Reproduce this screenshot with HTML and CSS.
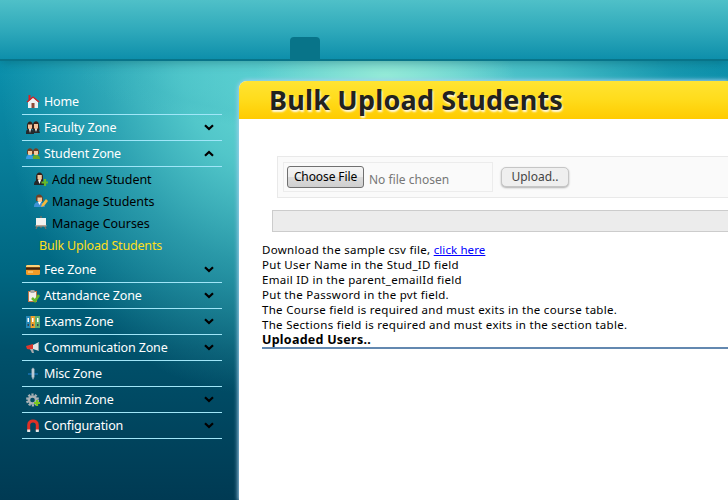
FILE: index.html
```html
<!DOCTYPE html>
<html lang="en">
<head>
<meta charset="utf-8">
<title>Bulk Upload Students</title>
<link rel="stylesheet" href="styles.css">
</head>
<body>
<svg class="defs" aria-hidden="true">
  <symbol id="down" viewBox="0 0 10 7"><path d="M1 1.2 5 5 9 1.2" fill="none" stroke="#000" stroke-width="2.2"/></symbol>
  <symbol id="home" viewBox="0 0 14 14"><path d="M2 7 7 2.500l5 4.500v6H2z" fill="#edf0f2"/><path d="M5.500 8h3v5h-3z" fill="#8d4a39"/><path d="M2.500 0h2v5h-2z" fill="#d22"/><path d="M1 7 7 2l6 5" fill="none" stroke="#d81f20" stroke-width="1.300"/></symbol>
  <symbol id="faculty" viewBox="0 0 14 14"><path d="M1 5c0-6 6-6 6 0v3H1zM7 4c0-5 6-5 6 0l.5 5H7z" fill="#352019"/><path d="M2 3.600h4v3.600L4 9 2 7.200zM8 3h4v4l-2 2-2-2z" fill="#f2c298"/><path d="M0 12c0-4 2-4 4-4s3 1 4 4v1H0zM7 9l3-1 3 1 1 3H8z" fill="#25292b"/><path d="m3 8 1 4 1-4zM9 8l1 3 1-3z" fill="#fff"/></symbol>
  <symbol id="students" viewBox="0 0 14 14"><path d="M1 5c0-5 6-5 6 0v2H1zM7 5c0-5 6-5 6 0v2H7z" fill="#704025"/><path d="M2 4h4v3.500L4 9 2 7.500zM8 4h4v3.500L10 9 8 7.500z" fill="#f7cb9d"/><path d="M0 12c0-4 2-4 4-4s4 1 4 4z" fill="#3a9ce6"/><path d="M7 12c-1-3 1-4 3-4s4 1 4 4z" fill="#6cac26"/></symbol>
  <symbol id="add" viewBox="0 0 14 14"><path d="M2 5c0-6 7-6 7 0v4H2z" fill="#352019"/><path d="M3.500 3H7.800v4L6 9 3.500 7z" fill="#f3c8a0"/><path d="M0 13c0-4 2-5 5-5s5 1 6 5z" fill="#25282a"/><path d="m4 8 1.500 4L7 8z" fill="#fff"/><path d="M11 7v7M7.500 10.500h6.500" stroke="#65b82a" stroke-width="2.200"/></symbol>
  <symbol id="manage" viewBox="0 0 14 14"><path d="M2 5c-1-6 7-6 7 0v2H2z" fill="#704025"/><path d="M3.500 3.500H8v4L6 9 3.500 7z" fill="#f5c79a"/><path d="M0 13c0-4 2-5 5-5s5 1 6 5z" fill="#3f92d5"/><path d="m4 8 1.500 3L7 8z" fill="#fff"/><path d="m7 13 1-3 4-5 2 2-4 5z" fill="#f5b83c"/></symbol>
  <symbol id="board" viewBox="0 0 14 14"><path d="m4 9-2 4m8-4 2 4M7 0v12" stroke="#9c7153"/><path d="M2 2h10v8H2z" fill="#f2f2ef"/><path d="M1.500 9h11v1.500h-11z" fill="#baa393"/></symbol>
  <symbol id="card" viewBox="0 0 14 14"><rect y="2" width="14" height="10" rx="1.500" fill="#f39b27"/><path d="M0 3.500q0-1.500 1.500-1.500h11q1.500 0 1.500 1.500V4H0z" fill="#ffd176"/><path d="M0 4.300h14v2.500H0z" fill="#42240e"/><path d="M2 9h5" stroke="#ffe4a1"/></symbol>
  <symbol id="attend" viewBox="0 0 14 14"><path d="M2 2h9v11H2z" fill="#bd764a"/><path d="M3 3h7v9H3z" fill="#f3eeea"/><path d="M4.500 1h4v3h-4z" fill="#a9a7a6"/><path d="m6 9 3 3 4-6" fill="none" stroke="#65b82a" stroke-width="2.500"/></symbol>
  <symbol id="exams" viewBox="0 0 14 14"><path d="M0 1h4.500v12H0z" fill="#2589b9"/><path d="M4.500 1H9v12H4.500z" fill="#eba02d"/><path d="M9 1h5v12H9z" fill="#5fae70"/><path d="M1.500 3H3v4H1.500zM6 3h1.500v4H6zM11 3h1.500v4H11z" fill="#fff"/><path d="M1.500 10H3M6 10h1.500M11 10h1.500" stroke="#39434a" stroke-width="2"/></symbol>
  <symbol id="horn" viewBox="0 0 14 14"><path d="m0 5 7-2v6L1 8z" fill="#dd382e"/><path d="m7 4 6-3v9L7 8z" fill="#e2e3e4"/><path d="M4 8h3l1 4H6z" fill="#a7aaad"/><path d="M12.500 1v9" stroke="#949ca2"/></symbol>
  <symbol id="misc" viewBox="0 0 14 14"><path d="M2 7h10" stroke="#1269a0" stroke-width="2"/><path d="M5.500 2 7 .5 8.500 2v8L7 13l-1.500-3z" fill="#9eb1bf"/><path d="M7 2v8" stroke="#dce5eb"/></symbol>
  <symbol id="gear" viewBox="0 0 14 14"><circle cx="6.500" cy="7" r="5.500" fill="none" stroke="#a8b0b4" stroke-width="2" stroke-dasharray="2.200 1.250"/><circle cx="6.500" cy="7" r="3.600" fill="none" stroke="#a8b0b4" stroke-width="2.500"/><path d="M11 7v6M8 10h6" stroke="#78c81e" stroke-width="2.200"/></symbol>
  <symbol id="magnet" viewBox="0 0 14 14"><path d="M2.700 12V6c0-5.500 8.600-5.500 8.600 0v6" fill="none" stroke="#df3026" stroke-width="3"/><path d="M1.200 10.500h3V13h-3zm8.600 0h3V13h-3z" fill="#e4e6e7"/></symbol>
</svg>
<header class="topbar"><span class="tab"></span></header>
<div class="layout">
  <nav class="sidebar">
    <a class="item"><svg class="icon"><use href="#home"/></svg><span>Home</span></a>
    <a class="item"><svg class="icon"><use href="#faculty"/></svg><span>Faculty Zone</span><svg class="arrow"><use href="#down"/></svg></a>
    <a class="item"><svg class="icon"><use href="#students"/></svg><span>Student Zone</span><svg class="arrow up"><use href="#down"/></svg></a>
    <div class="submenu">
      <a class="sub"><svg class="icon"><use href="#add"/></svg><span>Add new Student</span></a>
      <a class="sub"><svg class="icon"><use href="#manage"/></svg><span>Manage Students</span></a>
      <a class="sub"><svg class="icon"><use href="#board"/></svg><span>Manage Courses</span></a>
      <a class="sub current"><span>Bulk Upload Students</span></a>
    </div>
    <a class="item"><svg class="icon"><use href="#card"/></svg><span>Fee Zone</span><svg class="arrow"><use href="#down"/></svg></a>
    <a class="item"><svg class="icon"><use href="#attend"/></svg><span>Attandance Zone</span><svg class="arrow"><use href="#down"/></svg></a>
    <a class="item"><svg class="icon"><use href="#exams"/></svg><span>Exams Zone</span><svg class="arrow"><use href="#down"/></svg></a>
    <a class="item"><svg class="icon"><use href="#horn"/></svg><span>Communication Zone</span><svg class="arrow"><use href="#down"/></svg></a>
    <a class="item"><svg class="icon"><use href="#misc"/></svg><span>Misc Zone</span></a>
    <a class="item"><svg class="icon"><use href="#gear"/></svg><span>Admin Zone</span><svg class="arrow"><use href="#down"/></svg></a>
    <a class="item"><svg class="icon"><use href="#magnet"/></svg><span>Configuration</span><svg class="arrow"><use href="#down"/></svg></a>
  </nav>
  <main class="panel">
    <h1>Bulk Upload Students</h1>
    <div class="uploader">
      <div class="filebox"><button class="choose">Choose File</button><span class="nofile">No file chosen</span></div>
      <button class="upload">Upload..</button>
    </div>
    <div class="progress"></div>
    <div class="notes">
      <p>Download the sample csv file, <a class="link" href="#">click here</a></p>
      <p>Put User Name in the Stud_ID field</p>
      <p>Email ID in the parent_emailId field</p>
      <p>Put the Password in the pvt field.</p>
      <p>The Course field is required and must exits in the course table.</p>
      <p>The Sections field is required and must exits in the section table.</p>
      <h2>Uploaded Users..</h2>
    </div>
  </main>
</div>
</body>
</html>
```
FILE: styles.css
```css
* { box-sizing: border-box; }
body {
  margin: 0;
  height: 500px;
  overflow: hidden;
  font-family: "Noto Sans", sans-serif;
  background:
    radial-gradient(ellipse 130px 50px at 385px 75px, rgba(150, 235, 215, .95), transparent),
    radial-gradient(ellipse 330px 60px at 410px 75px, rgba(104, 212, 212, .95), rgba(84, 202, 206, .75) 45%, rgba(60, 180, 190, .25) 80%, transparent),
    radial-gradient(ellipse 260px 330px at 260px 65px, rgba(104, 218, 214, 1), rgba(92, 208, 208, .88) 30%, rgba(75, 190, 196, .55) 60%, transparent),
    linear-gradient(#0b91ad 60px, #087f9b 150px, #006782 270px, #00516b 350px, #003a53 500px);
}
.defs { display: none; }
.topbar {
  height: 61px;
  padding: 37px 0 0 290px;
  border-bottom: 2px solid #087489;
  background: linear-gradient(#4fc0c8, #30aabb 50%, #0e8fab);
  box-shadow: 0 1px 10px rgba(0, 70, 80, .4);
}
.tab { display: block; width: 30px; height: 22px; border-radius: 4px 4px 0 0; background: #087489; }
.layout { display: flex; height: 439px; }
.sidebar { width: 200px; margin: 28px 17px 0 22px; flex: none; }
.item {
  display: flex;
  align-items: center;
  height: 26px;
  padding: 0 8px 0 4px;
  border-bottom: 1px solid #a0e6f8;
  color: #fff;
  font-size: 12.5px;
  letter-spacing: -.15px;
}
.icon { width: 14px; height: 14px; margin-right: 4px; flex: none; }
.arrow { width: 10px; height: 7px; margin-left: auto; }
.up { transform: rotate(180deg); }
.submenu { padding: 1px 0; }
.sub { display: flex; align-items: center; height: 22px; padding-left: 12px; color: #000; font-size: 12.5px; letter-spacing: -.05px; }
.current { padding-left: 17px; color: #ffdf1b; letter-spacing: -.18px; }
.panel {
  flex: 1;
  min-width: 0;
  margin-top: 20px;
  background: #fff;
  border-radius: 8px 0 0 0;
  box-shadow: 0 0 4px 1px #a6d0ee;
}
h1 {
  height: 38px;
  margin: 0;
  padding-left: 30px;
  border-radius: 8px 0 0 0;
  background: linear-gradient(#ffe433, #ffdc1c 48%, #ffcb00);
  color: #22221e;
  font: bold 27px/38px "Noto Sans", sans-serif;
  letter-spacing: .2px;
  white-space: nowrap;
  text-shadow: 1px 2px 2px rgba(255, 255, 255, .9);
}
.uploader {
  display: flex;
  align-items: center;
  height: 42px;
  margin: 37px 0 0 38px;
  padding-left: 5px;
  border: 1px solid #e9e9e9;
  border-right: 0;
  background: #fafafa;
}
.filebox { display: flex; align-items: center; width: 210px; height: 30px; padding-left: 3px; border: 1px solid #ececec; }
.choose {
  width: 77px;
  height: 22px;
  padding: 0 0 1px;
  border: 1px solid #707070;
  border-radius: 3px;
  background: linear-gradient(#f4f4f4, #ececec 50%, #dcdcdc 50%, #cfcfcf);
  font: 12px "Noto Sans", sans-serif;
  letter-spacing: -.1px;
}
.nofile { margin: 5px 0 0 5px; color: #777; font-size: 12px; }
.upload {
  width: 68px;
  height: 20px;
  margin-left: 8px;
  padding: 0;
  border: 1px solid #c6c6c6;
  border-radius: 5px;
  background: #efefef;
  box-shadow: 0 1px 2px rgba(0, 0, 0, .3);
  color: #444;
  font: 12px/16px "Noto Sans", sans-serif;
}
.progress { height: 22px; margin: 12px 0 0 33px; border: 1px solid #ccc; border-right: 0; background: #ececec; }
.notes { margin: 10px 0 0 23px; font-size: 11.5px; line-height: 15px; letter-spacing: .29px; color: #000; }
p { margin: 0; white-space: nowrap; }
.link { color: #00f; letter-spacing: .1px; }
h2 { height: 17px; margin: 0; padding-top: 1px; border-bottom: 2px solid #6388b0; color: #000; font-size: 12.500px; line-height: 14px; letter-spacing: .25px; }
```
